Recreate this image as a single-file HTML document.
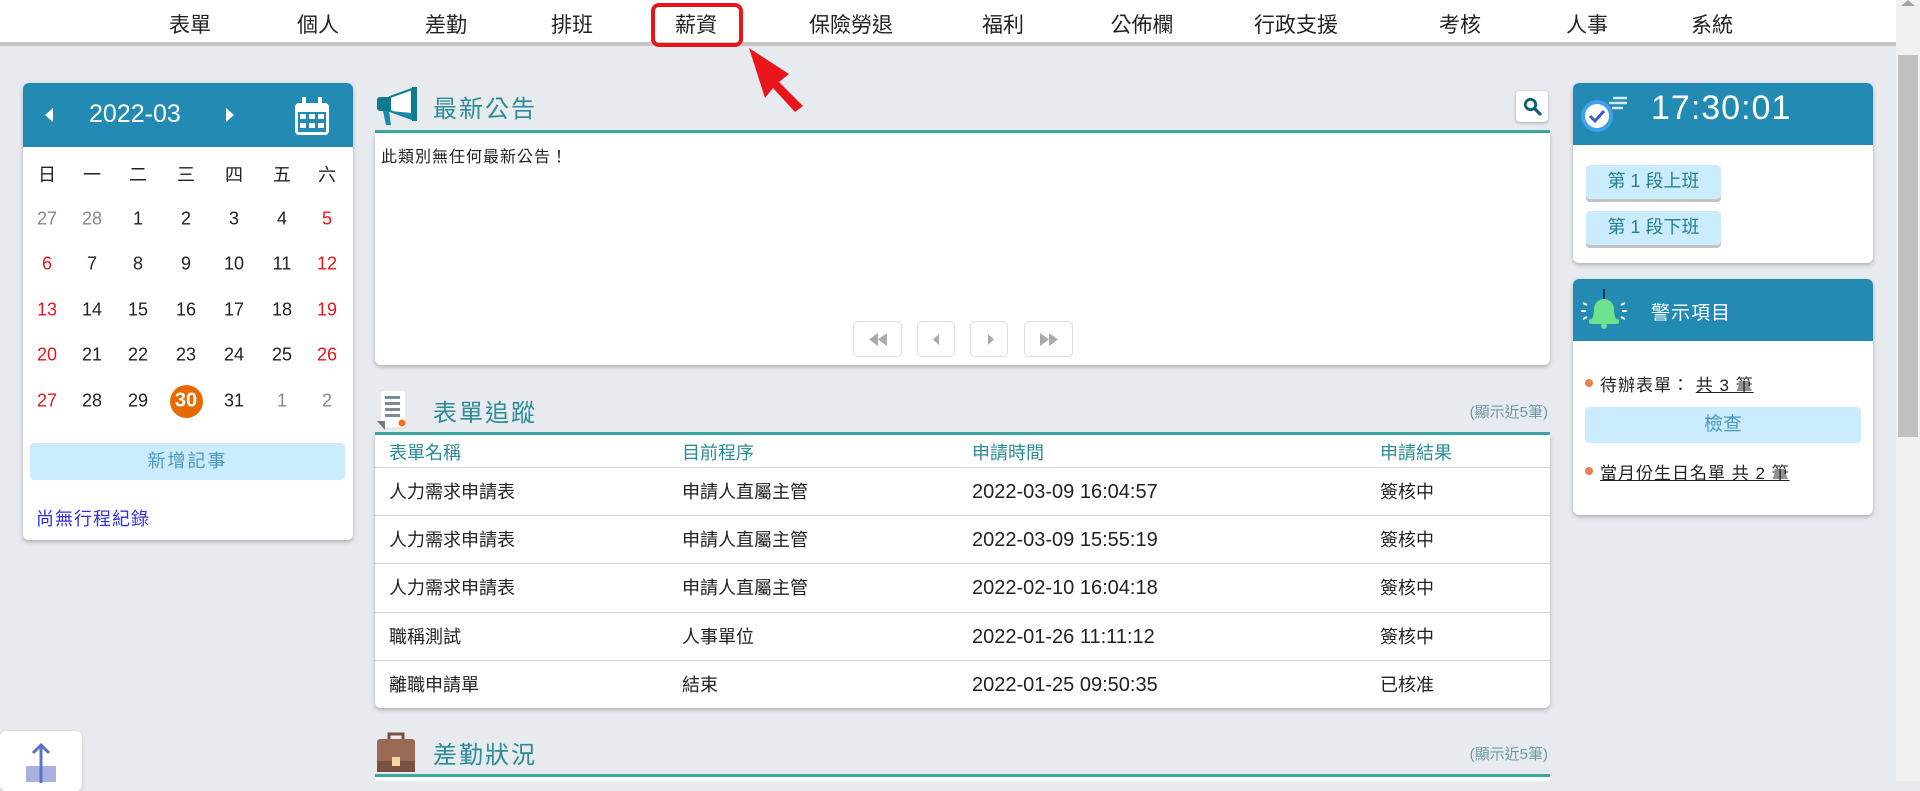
<!DOCTYPE html>
<html><head><meta charset="utf-8">
<style>
*{margin:0;padding:0;box-sizing:border-box}
body{width:1920px;height:781px;overflow:hidden;background:#e7ebef;font-family:"Liberation Sans","Noto Sans CJK TC",sans-serif;position:relative;color:#222}
.a{position:absolute}
.nav{left:0;top:0;width:1896px;height:46px;background:#fff;border-bottom:4px solid #c6c6c6}
.nav span{position:absolute;top:9px;font-size:21px;color:#222;transform:translateX(-50%);white-space:nowrap}
.card{background:#fff;border-radius:6px;box-shadow:0 2px 4px rgba(0,0,0,.25);overflow:hidden}
.hd{background:#238bb3;color:#fff}
.c{position:absolute;transform:translate(-50%,-50%);font-size:18px;white-space:nowrap}
.red{color:#e8161b}.gr{color:#888}
.title{font-size:24px;color:#2b8b97;letter-spacing:2px}
.teal{height:3px;background:#3aa7a5}
.row{position:absolute;left:0;width:1175px;border-top:1px solid #d5d5d5;height:48px}
.row span{position:absolute;top:13px;font-size:18px;color:#222;white-space:nowrap;line-height:22px}
.row span.t{font-size:20px}
.pb{position:absolute;top:321px;height:36px;border:1px solid #ddd;border-radius:5px;background:#fff}
.btn{position:absolute;background:#cbecfc;border-radius:4px;color:#247f91;font-size:18px;text-align:center}
.note{position:absolute;right:372px;font-size:15px;color:#6b9aa3}
</style></head><body>
<div class="a nav">
<span style="left:190px">表單</span><span style="left:318px">個人</span><span style="left:446px">差勤</span><span style="left:572px">排班</span><span style="left:696px">薪資</span><span style="left:851px">保險勞退</span><span style="left:1003px">福利</span><span style="left:1142px">公佈欄</span><span style="left:1296px">行政支援</span><span style="left:1460px">考核</span><span style="left:1587px">人事</span><span style="left:1712px">系統</span>
</div>
<div class="a" style="left:651px;top:3px;width:92px;height:44px;border:4px solid #e8161b;border-radius:8px"></div>
<svg class="a" style="left:745px;top:44px" width="70" height="70"><polygon points="4,4 44,30 34,38 58,62 50,68 28,44 20,54" fill="#e8161b"/></svg>
<div class="a" style="left:1896px;top:0;width:24px;height:781px;background:#f1f1f1"></div>
<div class="a" style="left:1898px;top:55px;width:20px;height:382px;background:#c1c1c1"></div>
<svg class="a" style="left:1901px;top:0" width="14" height="6"><polygon points="7,0 14,6 0,6" fill="#a3a3a3"/></svg>

<div class="a card" style="left:23px;top:83px;width:330px;height:457px">
<div class="hd" style="height:64px;position:relative">
<svg class="a" style="left:22px;top:25px" width="8" height="14"><polygon points="8,0 8,14 0,7" fill="#fff"/></svg>
<div class="a" style="left:66px;top:17px;font-size:25px;color:#fff">2022-03</div>
<svg class="a" style="left:203px;top:25px" width="8" height="14"><polygon points="0,0 0,14 8,7" fill="#fff"/></svg>
<svg class="a" style="left:270px;top:14px" width="38" height="40"><rect x="2" y="6" width="34" height="32" rx="4" fill="#fff"/><rect x="9" y="0" width="4" height="9" fill="#fff"/><rect x="25" y="0" width="4" height="9" fill="#fff"/><rect x="5" y="15" width="28" height="20" fill="#238bb3"/><g fill="#fff"><rect x="7" y="17" width="6" height="5"/><rect x="16" y="17" width="6" height="5"/><rect x="25" y="17" width="6" height="5"/><rect x="7" y="26" width="6" height="5"/><rect x="16" y="26" width="6" height="5"/><rect x="25" y="26" width="6" height="5"/></g></svg>
</div>
</div>
<div class="a" style="left:0;top:0">
<span class="c" style="left:47px;top:174px">日</span><span class="c" style="left:92px;top:174px">一</span><span class="c" style="left:138px;top:174px">二</span><span class="c" style="left:186px;top:174px">三</span><span class="c" style="left:234px;top:174px">四</span><span class="c" style="left:282px;top:174px">五</span><span class="c" style="left:327px;top:174px">六</span>
<span class="c gr" style="left:47px;top:219px">27</span><span class="c gr" style="left:92px;top:219px">28</span><span class="c" style="left:138px;top:219px">1</span><span class="c" style="left:186px;top:219px">2</span><span class="c" style="left:234px;top:219px">3</span><span class="c" style="left:282px;top:219px">4</span><span class="c red" style="left:327px;top:219px">5</span>
<span class="c red" style="left:47px;top:264px">6</span><span class="c" style="left:92px;top:264px">7</span><span class="c" style="left:138px;top:264px">8</span><span class="c" style="left:186px;top:264px">9</span><span class="c" style="left:234px;top:264px">10</span><span class="c" style="left:282px;top:264px">11</span><span class="c red" style="left:327px;top:264px">12</span>
<span class="c red" style="left:47px;top:310px">13</span><span class="c" style="left:92px;top:310px">14</span><span class="c" style="left:138px;top:310px">15</span><span class="c" style="left:186px;top:310px">16</span><span class="c" style="left:234px;top:310px">17</span><span class="c" style="left:282px;top:310px">18</span><span class="c red" style="left:327px;top:310px">19</span>
<span class="c red" style="left:47px;top:355px">20</span><span class="c" style="left:92px;top:355px">21</span><span class="c" style="left:138px;top:355px">22</span><span class="c" style="left:186px;top:355px">23</span><span class="c" style="left:234px;top:355px">24</span><span class="c" style="left:282px;top:355px">25</span><span class="c red" style="left:327px;top:355px">26</span>
<span class="c red" style="left:47px;top:401px">27</span><span class="c" style="left:92px;top:401px">28</span><span class="c" style="left:138px;top:401px">29</span>
<span class="a" style="left:170px;top:385px;width:33px;height:33px;border-radius:50%;background:#e66a00"></span><span class="c" style="left:186px;top:401px;color:#fff;font-weight:bold;font-size:20px">30</span>
<span class="c" style="left:234px;top:401px">31</span><span class="c gr" style="left:282px;top:401px">1</span><span class="c gr" style="left:327px;top:401px">2</span>
</div>
<div class="btn" style="left:30px;top:443px;width:315px;height:37px;line-height:37px;color:#4a98bd;letter-spacing:2px">新增記事</div>
<div class="a" style="left:36px;top:505px;font-size:18px;color:#2f2fe0;letter-spacing:1px">尚無行程紀錄</div>

<svg class="a" style="left:376px;top:87px" width="46" height="40"><path d="M4 10h10v14H4a3 3 0 0 1-3-3v-8a3 3 0 0 1 3-3z" fill="#0e7a8c"/><path d="M14 10 L36 2 V32 L14 24z" fill="#fff" stroke="#0e7a8c" stroke-width="2"/><rect x="36" y="0" width="5" height="34" fill="#0e7a8c"/><path d="M7 24 L10 38 H15 L13 24z" fill="#1d87b0"/><path d="M14 24 L36 32 V26z" fill="#1d87b0"/></svg>
<div class="a title" style="left:433px;top:89px">最新公告</div>
<div class="a" style="left:1516px;top:91px;width:32px;height:31px;background:#fff;border-radius:4px;box-shadow:0 1px 3px rgba(0,0,0,.3)"><svg style="position:absolute;left:7px;top:6px" width="19" height="19"><circle cx="7.5" cy="7.5" r="5.2" fill="none" stroke="#0c5e6e" stroke-width="2.8"/><line x1="11.5" y1="11.5" x2="17" y2="17" stroke="#0c5e6e" stroke-width="3.2" stroke-linecap="round"/></svg></div>
<div class="a teal" style="left:375px;top:130px;width:1175px"></div>
<div class="a card" style="left:375px;top:133px;width:1175px;height:232px;border-radius:0 0 6px 6px">
<div class="a" style="left:6px;top:10px;font-size:16px;letter-spacing:1px">此類別無任何最新公告！</div>
</div>
<div class="pb" style="left:853px;width:49px"><svg style="position:absolute;left:15px;top:11px" width="18" height="13"><polygon points="9,0 9,13 0,6.5" fill="#aaa"/><polygon points="18,0 18,13 9,6.5" fill="#aaa"/></svg></div>
<div class="pb" style="left:917px;width:38px"><svg style="position:absolute;left:15px;top:12px" width="6" height="11"><polygon points="6,0 6,11 0,5.5" fill="#aaa"/></svg></div>
<div class="pb" style="left:970px;width:38px"><svg style="position:absolute;left:17px;top:12px" width="6" height="11"><polygon points="0,0 0,11 6,5.5" fill="#aaa"/></svg></div>
<div class="pb" style="left:1024px;width:49px"><svg style="position:absolute;left:15px;top:11px" width="18" height="13"><polygon points="0,0 0,13 9,6.5" fill="#aaa"/><polygon points="9,0 9,13 18,6.5" fill="#aaa"/></svg></div>

<svg class="a" style="left:377px;top:390px" width="36" height="40"><rect x="3" y="0" width="26" height="38" rx="3" fill="#fff" stroke="#ddd"/><g fill="#7d8b96"><rect x="8" y="6" width="15" height="3"/><rect x="8" y="12" width="15" height="3"/><rect x="8" y="18" width="15" height="3"/><rect x="8" y="24" width="15" height="3"/></g><polygon points="0,31 8,31 8,40" fill="#777"/><circle cx="25" cy="33" r="3.5" fill="#f07020"/></svg>
<div class="a title" style="left:433px;top:393px">表單追蹤</div>
<div class="note" style="top:401px">(顯示近5筆)</div>
<div class="a teal" style="left:375px;top:432px;width:1175px"></div>
<div class="a card" style="left:375px;top:435px;width:1175px;height:273px;border-radius:0 0 6px 6px">
<div class="a" style="left:0;top:0;width:1175px;height:32px;font-size:18px;color:#2b8b97">
<span class="a" style="left:14px;top:4px">表單名稱</span><span class="a" style="left:307px;top:4px">目前程序</span><span class="a" style="left:597px;top:4px">申請時間</span><span class="a" style="left:1005px;top:4px">申請結果</span></div>
<div class="row" style="top:32px"><span style="left:14px">人力需求申請表</span><span style="left:307px">申請人直屬主管</span><span class="t" style="left:597px">2022-03-09 16:04:57</span><span style="left:1005px">簽核中</span></div>
<div class="row" style="top:80px"><span style="left:14px">人力需求申請表</span><span style="left:307px">申請人直屬主管</span><span class="t" style="left:597px">2022-03-09 15:55:19</span><span style="left:1005px">簽核中</span></div>
<div class="row" style="top:128px"><span style="left:14px">人力需求申請表</span><span style="left:307px">申請人直屬主管</span><span class="t" style="left:597px">2022-02-10 16:04:18</span><span style="left:1005px">簽核中</span></div>
<div class="row" style="top:177px"><span style="left:14px">職稱測試</span><span style="left:307px">人事單位</span><span class="t" style="left:597px">2022-01-26 11:11:12</span><span style="left:1005px">簽核中</span></div>
<div class="row" style="top:225px"><span style="left:14px">離職申請單</span><span style="left:307px">結束</span><span class="t" style="left:597px">2022-01-25 09:50:35</span><span style="left:1005px">已核准</span></div>
</div>

<svg class="a" style="left:376px;top:731px" width="40" height="42"><path d="M13 8V3h14v5" fill="none" stroke="#7a5040" stroke-width="3"/><rect x="1" y="8" width="38" height="33" rx="3" fill="#9b6a55"/><rect x="1" y="30" width="38" height="11" fill="#7a5040"/><rect x="16" y="26" width="8" height="9" fill="#f4d6a0"/></svg>
<div class="a title" style="left:433px;top:735px">差勤狀況</div>
<div class="note" style="top:743px">(顯示近5筆)</div>
<div class="a teal" style="left:375px;top:774px;width:1175px"></div>
<div class="a" style="left:375px;top:777px;width:1175px;height:4px;background:#fff"></div>

<div class="a card" style="left:1573px;top:83px;width:300px;height:180px">
<div class="hd" style="height:62px;position:relative">
<svg class="a" style="left:6px;top:6px" width="52" height="44"><g stroke="#d8e8f0" stroke-width="2.5"><line x1="34" y1="9" x2="48" y2="9"/><line x1="30" y1="14" x2="48" y2="14"/><line x1="33" y1="19" x2="44" y2="19"/></g><circle cx="18" cy="27" r="14" fill="#fff" stroke="#3da0e8" stroke-width="4"/><path d="M11 27l5 5 9-10" fill="none" stroke="#3a5bc2" stroke-width="3"/></svg>
<div class="a" style="left:78px;top:6px;font-size:34px;color:#fff;letter-spacing:1px">17:30:01</div>
</div>
</div>
<div class="btn" style="left:1586px;top:165px;width:135px;height:34px;line-height:32px;box-shadow:0 3px 0 #c4c4c4">第 1 段上班</div>
<div class="btn" style="left:1586px;top:211px;width:135px;height:34px;line-height:32px;box-shadow:0 3px 0 #c4c4c4">第 1 段下班</div>

<div class="a card" style="left:1573px;top:279px;width:300px;height:236px">
<div class="hd" style="height:62px;position:relative">
<svg class="a" style="left:7px;top:8px" width="48" height="46"><line x1="24" y1="2" x2="24" y2="12" stroke="#1a3a5a" stroke-width="2"/><path d="M12 34c0-4 2-5 2-12a10 10 0 0 1 20 0c0 7 2 8 2 12z" fill="#6fe08e"/><rect x="9" y="32" width="30" height="5" rx="2" fill="#6fe08e"/><circle cx="24" cy="39" r="3" fill="#6fe08e"/><g stroke="#fff" stroke-width="2"><line x1="3" y1="16" x2="7" y2="18"/><line x1="1" y1="24" x2="6" y2="24"/><line x1="3" y1="32" x2="7" y2="30"/><line x1="45" y1="16" x2="41" y2="18"/><line x1="47" y1="24" x2="42" y2="24"/><line x1="45" y1="32" x2="41" y2="30"/></g></svg>
<div class="a" style="left:78px;top:19px;font-size:19px;color:#fff;letter-spacing:1px">警示項目</div>
</div>
</div>
<div class="a" style="left:1585px;top:379px;width:8px;height:8px;border-radius:50%;background:#e88145"></div>
<div class="a" style="left:1600px;top:371px;font-size:17px;letter-spacing:1px">待辦表單： <u>共 3 筆</u></div>
<div class="btn" style="left:1585px;top:407px;width:276px;height:36px;line-height:36px;color:#4a98bd;font-size:19px">檢查</div>
<div class="a" style="left:1585px;top:467px;width:8px;height:8px;border-radius:50%;background:#e88145"></div>
<div class="a" style="left:1600px;top:459px;font-size:17px;letter-spacing:1px"><u>當月份生日名單 共 2 筆</u></div>

<div class="a" style="left:0;top:731px;width:82px;height:60px;background:#fff;border-radius:6px;box-shadow:0 1px 3px rgba(0,0,0,.2)">
<div class="a" style="left:26px;top:35px;width:30px;height:16px;background:#a8b0e0"></div>
<svg class="a" style="left:30px;top:12px" width="22" height="40"><line x1="11" y1="2" x2="11" y2="40" stroke="#6070c8" stroke-width="3"/><path d="M3 10l8-8 8 8" fill="none" stroke="#6070c8" stroke-width="3"/></svg>
</div>
</body></html>
